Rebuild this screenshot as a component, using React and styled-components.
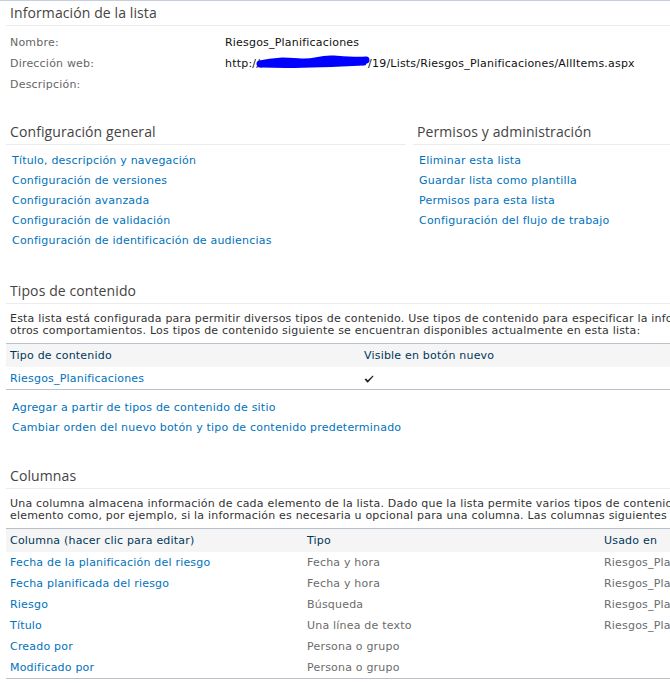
import React from "react";
import styled, { createGlobalStyle } from "styled-components";

const Global = createGlobalStyle`
  html, body {
    margin: 0;
    padding: 0;
    background: #fff;
    overflow: hidden;
  }
  body {
    font-family: "DejaVu Sans", Verdana, sans-serif;
    font-size: 11px;
    letter-spacing: 0.2px;
    color: #333;
  }
`;

const Page = styled.div`
  width: 1100px;
  border-top: 1px solid #c6cfdc;
  padding: 0 0 20px 6px;
`;

const Section = styled.section`
  margin-top: ${(p) => p.$top || 0}px;
`;

const Title = styled.h2`
  margin: 0;
  height: 24px;
  line-height: 24px;
  padding-left: 4px;
  font-family: "Open Sans", "Noto Sans", sans-serif;
  font-weight: normal;
  font-size: 14px;
  letter-spacing: 0.1px;
  color: #444;
  border-bottom: 1px solid #ececec;
  white-space: nowrap;
`;

const InfoGrid = styled.div`
  display: grid;
  grid-template-columns: 215px 1fr;
  padding: 6px 4px 0;
`;

const InfoCell = styled.div`
  height: 21px;
  line-height: 21px;
  white-space: nowrap;
  color: ${(p) => (p.$label ? "#666" : "#111")};
`;

const Columns = styled.div`
  display: grid;
  grid-template-columns: 400px 500px;
  column-gap: 7px;
`;

const LinkList = styled.ul`
  list-style: none;
  margin: 0;
  padding: ${(p) => p.$top || 6}px 0 0 6px;
`;

const LinkItem = styled.li`
  height: 20px;
  line-height: 20px;
  white-space: nowrap;
`;

const Link = styled.a`
  color: #0072bc;
  text-decoration: none;
  cursor: pointer;
`;

const Desc = styled.p`
  margin: 0;
  padding: 9px 4px 6px;
  line-height: 12px;
  color: #333;
  white-space: nowrap;
`;

const Table = styled.table`
  border-collapse: collapse;
  width: 1000px;
  border-top: 1px solid #b8c1cc;
  border-bottom: 1px solid #b8c1cc;
`;

const HeadCell = styled.th`
  text-align: left;
  font-weight: normal;
  color: #003759;
  background: #f5f5f5;
  height: 23px;
  padding: 0 4px;
  width: ${(p) => p.$w}px;
  white-space: nowrap;
`;

const Cell = styled.td`
  height: ${(p) => p.$h || 21}px;
  padding: 0 4px;
  white-space: nowrap;
  color: ${(p) => (p.$muted ? "#6b6b6b" : "#333")};
`;

const Redact = styled.svg`
  display: inline-block;
  vertical-align: middle;
  margin: -4px -2px 0 -4px;
`;

const Check = () => (
  <svg width="10" height="8" viewBox="0 0 10 8" style={{ verticalAlign: "middle" }}>
    <path d="M0.5 4.2 L2.2 3.4 L3.8 5.2 L8.8 0.4 L9.6 1.2 L4 7.4 L3.2 7.4 Z" fill="#222" />
  </svg>
);

const Scribble = () => (
  <Redact width="114" height="14" viewBox="0 0 114 14">
    <path
      d="M4 9 C 20 5, 30 6, 45 7 C 60 8, 62 3, 78 4 C 90 5, 100 6, 110 5"
      stroke="#0000ff"
      strokeWidth="7"
      strokeLinecap="round"
      fill="none"
    />
    <path d="M6 10 C 30 11, 70 10, 108 8" stroke="#0000ff" strokeWidth="5" strokeLinecap="round" fill="none" />
  </Redact>
);

const general = [
  "Título, descripción y navegación",
  "Configuración de versiones",
  "Configuración avanzada",
  "Configuración de validación",
  "Configuración de identificación de audiencias",
];

const perms = [
  "Eliminar esta lista",
  "Guardar lista como plantilla",
  "Permisos para esta lista",
  "Configuración del flujo de trabajo",
];

const columns = [
  ["Fecha de la planificación del riesgo", "Fecha y hora", "Riesgos_Planificaciones"],
  ["Fecha planificada del riesgo", "Fecha y hora", "Riesgos_Planificaciones"],
  ["Riesgo", "Búsqueda", "Riesgos_Planificaciones"],
  ["Título", "Una línea de texto", "Riesgos_Planificaciones"],
  ["Creado por", "Persona o grupo", ""],
  ["Modificado por", "Persona o grupo", ""],
];

function LinkSection({ items, top }) {
  return (
    <LinkList $top={top}>
      {items.map((t) => (
        <LinkItem key={t}>
          <Link>{t}</Link>
        </LinkItem>
      ))}
    </LinkList>
  );
}

export default function App() {
  return (
    <>
      <Global />
      <Page>
        <Section>
          <Title>Información de la lista</Title>
          <InfoGrid>
            <InfoCell $label>Nombre:</InfoCell>
            <InfoCell>Riesgos_Planificaciones</InfoCell>
            <InfoCell $label>Dirección web:</InfoCell>
            <InfoCell>
              http://<Scribble />/19/Lists/Riesgos_Planificaciones/AllItems.aspx
            </InfoCell>
            <InfoCell $label>Descripción:</InfoCell>
            <InfoCell />
          </InfoGrid>
        </Section>

        <Columns>
          <Section $top={25}>
            <Title>Configuración general</Title>
            <LinkSection items={general} />
          </Section>
          <Section $top={25}>
            <Title>Permisos y administración</Title>
            <LinkSection items={perms} />
          </Section>
        </Columns>

        <Section $top={28}>
          <Title>Tipos de contenido</Title>
          <Desc>
            Esta lista está configurada para permitir diversos tipos de contenido. Use tipos de contenido para especificar la información que desea mostrar acerca de un elemento, además de sus directivas, flujos de trabajo u
            <br />
            otros comportamientos. Los tipos de contenido siguiente se encuentran disponibles actualmente en esta lista:
          </Desc>
          <Table>
            <thead>
              <tr>
                <HeadCell $w={346}>Tipo de contenido</HeadCell>
                <HeadCell>Visible en botón nuevo</HeadCell>
              </tr>
            </thead>
            <tbody>
              <tr>
                <Cell $h={22}>
                  <Link>Riesgos_Planificaciones</Link>
                </Cell>
                <Cell $h={22}>
                  <Check />
                </Cell>
              </tr>
            </tbody>
          </Table>
          <LinkSection
            top={8}
            items={[
              "Agregar a partir de tipos de contenido de sitio",
              "Cambiar orden del nuevo botón y tipo de contenido predeterminado",
            ]}
          />
        </Section>

        <Section $top={26}>
          <Title>Columnas</Title>
          <Desc>
            Una columna almacena información de cada elemento de la lista. Dado que la lista permite varios tipos de contenido, algunas configuraciones de columna dependen del tipo de contenido del
            <br />
            elemento como, por ejemplo, si la información es necesaria u opcional para una columna. Las columnas siguientes se encuentran disponibles actualmente en esta lista:
          </Desc>
          <Table>
            <thead>
              <tr>
                <HeadCell $w={289}>Columna (hacer clic para editar)</HeadCell>
                <HeadCell $w={289}>Tipo</HeadCell>
                <HeadCell>Usado en</HeadCell>
              </tr>
            </thead>
            <tbody>
              {columns.map(([name, type, used]) => (
                <tr key={name}>
                  <Cell>
                    <Link>{name}</Link>
                  </Cell>
                  <Cell $muted>{type}</Cell>
                  <Cell $muted>{used}</Cell>
                </tr>
              ))}
            </tbody>
          </Table>
        </Section>
      </Page>
    </>
  );
}
